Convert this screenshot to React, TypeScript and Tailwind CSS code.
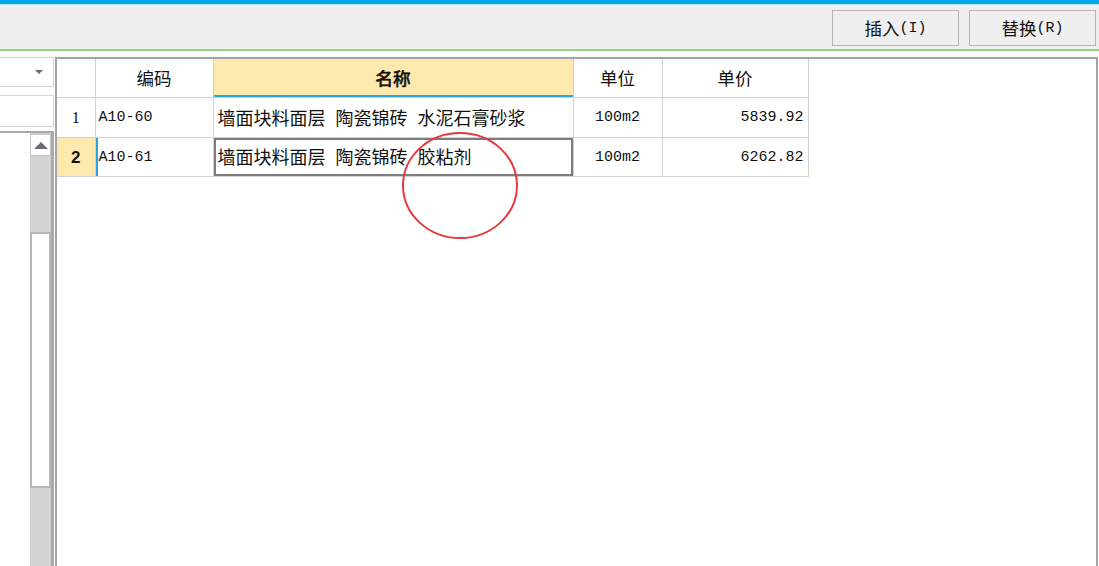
import React from 'react';

const font = { fontFamily: '"Liberation Mono", "Noto Sans CJK SC", monospace' };
const cjk = { fontFamily: '"Noto Sans CJK SC", "Liberation Sans", sans-serif' };

type Row = { no: string; code: string; name: string[]; unit: string; price: string };

const rows: Row[] = [
  { no: '1', code: 'A10-60', name: ['墙面块料面层', '陶瓷锦砖', '水泥石膏砂浆'], unit: '100m2', price: '5839.92' },
  { no: '2', code: 'A10-61', name: ['墙面块料面层', '陶瓷锦砖', '胶粘剂'], unit: '100m2', price: '6262.82' },
];

function ToolButton({ label, hot }: { label: string; hot: string }) {
  return (
    <button className="flex h-[36px] w-[127px] items-center justify-center border border-[#b4b4b4] bg-[#efefef] text-[#111]">
      <span className="text-[17.5px]" style={cjk}>
        {label}
      </span>
      <span className="pt-[2px] text-[15px]" style={font}>
        ({hot})
      </span>
    </button>
  );
}

function LeftPanel() {
  return (
    <div className="flex w-[54px] shrink-0 flex-col pt-[6px]">
      {/* dropdown */}
      <div className="relative h-[30px] border border-l-0 border-[#d6d6d6] bg-white">
        <span className="absolute right-[10px] top-[12px] h-0 w-0 border-x-[4px] border-t-[4px] border-x-transparent border-t-[#6b6b6b]" />
      </div>
      {/* search box */}
      <div className="mt-[8px] h-[32px] border border-l-0 border-[#d6d6d6] bg-white" />
      {/* list */}
      <div className="mt-[4px] flex flex-1 border-t-2 border-r-[3px] border-[#a9a9a9] bg-white">
        <div className="flex-1" />
        <div className="flex w-[21px] flex-col bg-[#d4d4d4] pt-[1px]">
          <div className="flex h-[22px] items-center justify-center border border-[#c4c4c4] bg-white">
            <span className="h-0 w-0 border-x-[7px] border-b-[7px] border-x-transparent border-b-[#6a6a75]" />
          </div>
          <div className="h-[76px]" />
          <div className="h-[256px] border-2 border-[#b8b8b8] bg-white" />
          <div className="flex-1" />
        </div>
      </div>
    </div>
  );
}

function DataGrid() {
  const th = 'border border-[#d2d2d2] font-normal text-[17.5px] text-[#111]';
  const td = 'border border-[#d2d2d2] text-[#111]';
  return (
    <div className="ml-[1px] mr-[1px] mt-[6px] flex-1 border-2 border-b-0 border-[#a4a4a4] bg-white">
      <table className="border-collapse" style={{ tableLayout: 'fixed' }}>
        <colgroup>
          <col className="w-[38px]" />
          <col className="w-[118px]" />
          <col className="w-[360px]" />
          <col className="w-[89px]" />
          <col className="w-[146px]" />
        </colgroup>
        <thead>
          <tr className="h-[38px]">
            <th className={`${th} border-l-0 border-t-0`} />
            <th className={`${th} border-t-0`} style={cjk}>编码</th>
            <th
              className={`${th} border-t-0 bg-[#fde9ad] shadow-[inset_0_-2px_0_#2aa3df] [-webkit-text-stroke:0.7px_#111]`}
              style={cjk}
            >
              名称
            </th>
            <th className={`${th} border-t-0`} style={cjk}>单位</th>
            <th className={`${th} border-t-0`} style={cjk}>单价</th>
          </tr>
        </thead>
        <tbody>
          {rows.map((r, i) => {
            const sel = i === 1;
            return (
              <tr key={r.no} className={i === 0 ? 'h-[40px]' : 'h-[39px]'}>
                <td
                  className={`${td} border-l-0 pt-[2px] text-center ${sel ? 'bg-[#fde9ad] text-[17px] font-bold' : 'text-[16px]'}`}
                  style={sel ? { fontFamily: '"Liberation Sans", sans-serif' } : { fontFamily: '"Liberation Serif", serif' }}
                >
                  {r.no}
                </td>
                <td
                  className={`${td} pl-[3px] pt-[3px] text-[15px] ${sel ? 'shadow-[inset_2px_0_0_#2aa3df]' : ''}`}
                  style={font}
                >
                  {r.code}
                </td>
                <td
                  className={`${td} pl-[4px] text-[18px] ${sel ? 'shadow-[inset_0_0_0_2px_#7d7d7d]' : ''}`}
                  style={cjk}
                >
                  <span className="flex gap-[10px] whitespace-nowrap">
                    {r.name.map((part) => (
                      <span key={part}>{part}</span>
                    ))}
                  </span>
                </td>
                <td className={`${td} pt-[3px] text-center text-[15px]`} style={font}>
                  {r.unit}
                </td>
                <td className={`${td} pr-[4px] pt-[3px] text-right text-[15px]`} style={font}>
                  {r.price}
                </td>
              </tr>
            );
          })}
        </tbody>
      </table>
    </div>
  );
}

export default function App() {
  return (
    <div className="relative flex h-[566px] w-[1099px] flex-col overflow-hidden bg-white">
      <div className="h-[4px] shrink-0 bg-[#04a6ec]" />
      <div className="h-[1px] shrink-0 bg-[#b8e4f6]" />
      <div className="flex h-[44px] shrink-0 items-start justify-end gap-[10px] bg-[#f0f0f0] pr-[3px] pt-[5px]">
        <ToolButton label="插入" hot="I" />
        <ToolButton label="替换" hot="R" />
      </div>
      <div className="h-[2px] shrink-0 bg-[#93d585]" />
      <div className="flex flex-1">
        <LeftPanel />
        <DataGrid />
      </div>
      {/* red annotation circle */}
      <svg className="absolute left-[400px] top-[131px]" width="120" height="109" viewBox="0 0 120 109">
        <ellipse cx="60" cy="54.5" rx="57" ry="52.5" fill="none" stroke="#e8383b" strokeWidth="2" />
      </svg>
    </div>
  );
}
